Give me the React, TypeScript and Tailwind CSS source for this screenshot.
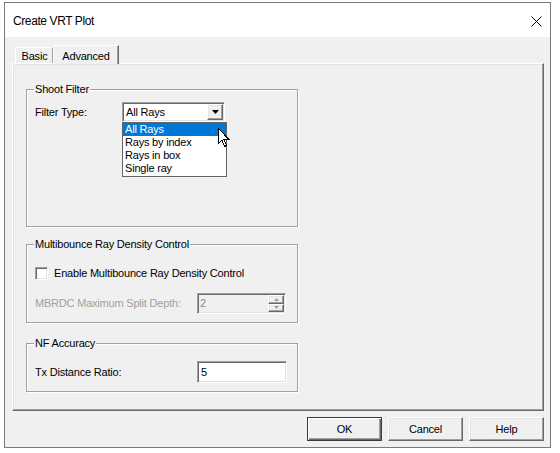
import React from 'react';

const raised =
  'border border-t-white border-l-white border-r-[#696969] border-b-[#696969] shadow-[inset_-1px_-1px_0_#a0a0a0,inset_1px_1px_0_#e3e3e3]';
const sunken =
  'border border-t-[#a0a0a0] border-l-[#a0a0a0] border-r-white border-b-white shadow-[inset_1px_1px_0_#696969,inset_-1px_-1px_0_#e3e3e3]';

function GroupBox({ title, className, children }: { title: string; className: string; children: React.ReactNode }) {
  return (
    <div className={`relative w-[272px] border border-[#a0a0a0] shadow-[inset_1px_1px_0_#fff,1px_1px_0_#fff] ${className}`}>
      <span className="absolute left-[7px] -top-[7px] bg-[#f0f0f0] px-[1px] leading-[13px]">{title}</span>
      {children}
    </div>
  );
}

function Cursor() {
  return (
    <svg width="13" height="20" viewBox="0 0 13 20" className="absolute left-[95px] top-[25px] z-20" shapeRendering="crispEdges">
      <path d="M0.5 0.5 L0.5 15.5 L4 12 L6.5 18.5 L8.5 17.5 L6 11.5 L11 11.5 Z" fill="#fff" stroke="#000" strokeWidth="1" />
    </svg>
  );
}

function DialogButton({ label, isDefault }: { label: string; isDefault?: boolean }) {
  return (
    <div
      className={`flex h-[24px] w-[75px] items-center justify-center ${
        isDefault
          ? 'border border-[#3c3c3c] shadow-[inset_1px_1px_0_#fff,inset_-1px_-1px_0_#696969,inset_-2px_-2px_0_#a0a0a0]'
          : raised
      }`}
    >
      {label}
    </div>
  );
}

export default function App() {
  const options = ['All Rays', 'Rays by index', 'Rays in box', 'Single ray'];

  return (
    <div className="h-[453px] w-[560px] bg-white pt-[2px] pl-[4px] text-[11px] text-black font-['Liberation_Sans',Arial,sans-serif] tracking-[-0.2px]">
      <div className="flex h-[446px] w-[547px] flex-col border border-[#7a7a7a]">
        {/* Title bar */}
        <div className="flex h-[34px] items-center justify-between bg-white pl-[8px] pr-[8px] pt-[2px]">
          <span className="text-[12px] tracking-[-0.4px]">Create VRT Plot</span>
          <svg width="11" height="11" viewBox="0 0 11 11" className="mt-[1px]">
            <path d="M0.5 0.5 L10.5 10.5 M10.5 0.5 L0.5 10.5" stroke="#000" strokeWidth="1" />
          </svg>
        </div>

        {/* Body */}
        <div className="flex flex-1 flex-col bg-[#f0f0f0]">
          {/* Tabs */}
          <div className="ml-[10px] mt-[8px] flex h-[18px] items-end">
            <div className="flex h-[16px] w-[38px] items-center justify-center border-l border-t border-r border-l-white border-t-white border-r-[#a0a0a0] pl-[1px] pt-[1px]">
              Basic
            </div>
            <div className="relative z-10 -mb-px flex h-[19px] w-[66px] items-start justify-center border-l border-t border-r border-l-white border-t-white border-r-[#696969] bg-[#f0f0f0] pt-[2px] shadow-[inset_-1px_0_0_#a0a0a0]">
              Advanced
            </div>
          </div>

          {/* Tab panel */}
          <div className={`ml-[7px] flex h-[348px] w-[532px] flex-col pl-[13px] pt-[25px] ${raised}`}>
            <GroupBox title="Shoot Filter" className="h-[138px] pl-[8px] pt-[12px]">
              <div className="flex h-[20px] items-center">
                <span className="w-[87px]">Filter Type:</span>
                <div className={`relative flex h-[20px] w-[103px] items-center bg-white ${sunken}`}>
                  <span className="flex-1 pl-[3px]">All Rays</span>
                  <div className={`mr-px flex h-[16px] w-[16px] items-center justify-center bg-[#f0f0f0] ${raised}`}>
                    <svg width="7" height="4" viewBox="0 0 7 4">
                      <path d="M0 0 L7 0 L3.5 4 Z" fill="#000" />
                    </svg>
                  </div>
                  {/* Open list */}
                  <div className="absolute -left-px top-[19px] z-10 flex h-[55px] w-[105px] flex-col border border-[#646464] bg-white">
                    {options.map((o, i) => (
                      <div
                        key={o}
                        className={`h-[13px] pl-[2px] leading-[13px] ${i === 0 ? 'bg-[#0078d7] text-white' : ''}`}
                      >
                        {o}
                      </div>
                    ))}
                  </div>
                  <Cursor />
                </div>
              </div>
            </GroupBox>

            <GroupBox title="Multibounce Ray Density Control" className="mt-[17px] h-[79px] pl-[8px] pt-[22px]">
              <div className="flex h-[13px] items-center">
                <div className={`h-[13px] w-[13px] bg-white ${sunken}`} />
                <span className="ml-[6px]">Enable Multibounce Ray Density Control</span>
              </div>
              <div className="mt-[13px] flex h-[21px] items-center">
                <span className="w-[162px] text-[#a0a0a0]">MBRDC Maximum Split Depth:</span>
                <div className={`flex h-[21px] w-[89px] items-stretch bg-[#f0f0f0] ${sunken}`}>
                  <span className="flex flex-1 items-center pl-[2px] text-[#8a8a8a]">2</span>
                  <div className="mr-px mt-px mb-px flex w-[16px] flex-col">
                    <div className={`flex h-[9px] items-center justify-center ${raised}`}>
                      <svg width="5" height="3" viewBox="0 0 5 3">
                        <path d="M2.5 0 L5 3 L0 3 Z" fill="#a0a0a0" />
                      </svg>
                    </div>
                    <div className={`flex h-[9px] items-center justify-center ${raised}`}>
                      <svg width="5" height="3" viewBox="0 0 5 3">
                        <path d="M0 0 L5 0 L2.5 3 Z" fill="#a0a0a0" />
                      </svg>
                    </div>
                  </div>
                </div>
              </div>
            </GroupBox>

            <GroupBox title="NF Accuracy" className="mt-[20px] h-[49px] pl-[8px] pt-[17px]">
              <div className="flex h-[22px] items-center">
                <span className="w-[162px]">Tx Distance Ratio:</span>
                <div className={`flex h-[22px] w-[90px] items-center bg-white pl-[3px] ${sunken}`}>5</div>
              </div>
            </GroupBox>
          </div>

          {/* Buttons */}
          <div className="mt-[6px] flex justify-end gap-[6px] pr-[6px]">
            <DialogButton label="OK" isDefault />
            <DialogButton label="Cancel" />
            <DialogButton label="Help" />
          </div>
        </div>
      </div>
    </div>
  );
}
